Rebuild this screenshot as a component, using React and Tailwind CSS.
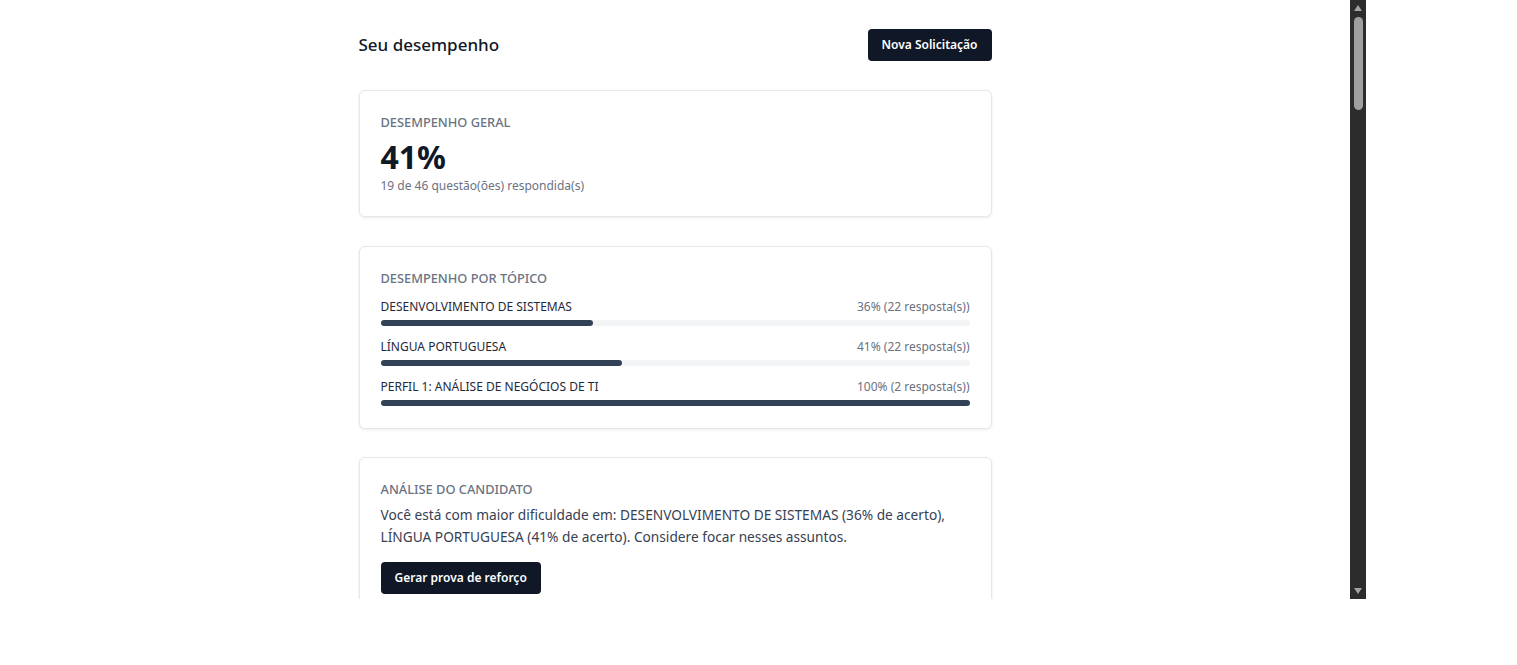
import React from "react";

const topics = [
  { name: "DESENVOLVIMENTO DE SISTEMAS", pct: 36, n: 22 },
  { name: "LÍNGUA PORTUGUESA", pct: 41, n: 22 },
  { name: "PERFIL 1: ANÁLISE DE NEGÓCIOS DE TI", pct: 100, n: 2 },
];

function Card({ children }) {
  return (
    <div className="rounded-md border border-gray-200 bg-white px-[21px] pt-[23px] pb-[22px] shadow-[0_1px_3px_rgba(0,0,0,0.08)]">
      {children}
    </div>
  );
}

function Label({ children }) {
  return (
    <div className="text-[12.8px] leading-4 font-medium uppercase text-gray-500">
      {children}
    </div>
  );
}

export default function App() {
  return (
    <div
      className="w-[1517px] h-[665px] bg-white"
      style={{ fontFamily: '"Noto Sans", "Open Sans", sans-serif' }}
    >
      <div className="flex h-[599px] w-[1366px]">
        <div className="h-full w-[1350px] overflow-hidden">
          <div className="mx-auto w-[633px] pt-[29px]">
            <div className="flex items-center justify-between">
              <h1 className="text-[17px] font-medium text-gray-900">Seu desempenho</h1>
              <button className="h-8 rounded-[4px] bg-gray-900 px-[14px] text-[12px] font-semibold text-white">
                Nova Solicitação
              </button>
            </div>

            <div className="mt-[29px] flex flex-col gap-[29px]">
              <Card>
                <Label>Desempenho geral</Label>
                <div className="mt-[7px] text-[32px] leading-[40px] font-bold text-gray-900">41%</div>
                <div className="mt-[1px] text-[12px] leading-4 text-gray-500">
                  19 de 46 questão(ões) respondida(s)
                </div>
              </Card>

              <Card>
                <Label>Desempenho por tópico</Label>
                <div className="mt-3 flex flex-col gap-3">
                  {topics.map((t) => (
                    <div key={t.name}>
                      <div className="flex justify-between text-[12px] leading-[18px]">
                        <span className="text-gray-800">{t.name}</span>
                        <span className="text-gray-500">
                          {t.pct}% ({t.n} resposta(s))
                        </span>
                      </div>
                      <div className="mt-1 h-1.5 w-full rounded-full bg-gray-100">
                        <div
                          className="h-1.5 rounded-full bg-slate-700"
                          style={{ width: `${t.pct}%` }}
                        />
                      </div>
                    </div>
                  ))}
                </div>
              </Card>

              <div className="-mt-[1px]">
                <Card>
                  <Label>Análise do candidato</Label>
                  <p className="mt-[7px] text-[13.7px] leading-[22px] text-gray-700">
                    Você está com maior dificuldade em: DESENVOLVIMENTO DE SISTEMAS (36% de acerto),
                    LÍNGUA PORTUGUESA (41% de acerto). Considere focar nesses assuntos.
                  </p>
                  <button className="mt-[14px] h-8 rounded-[4px] bg-gray-900 px-[14px] text-[12px] font-semibold text-white">
                    Gerar prova de reforço
                  </button>
                </Card>
              </div>
            </div>
          </div>
        </div>

        <div className="flex h-full w-4 flex-col items-center bg-[#2c2c2c]">
          <div className="flex h-[16px] w-full items-center justify-center">
            <svg width="8" height="6" viewBox="0 0 8 6">
              <path d="M4 0 L8 6 L0 6 Z" fill="#a3a3a3" />
            </svg>
          </div>
          <div className="mt-[1px] h-[93px] w-[9px] rounded-full bg-[#9f9f9f]" />
          <div className="flex-1" />
          <div className="flex h-[16px] w-full items-center justify-center">
            <svg width="8" height="6" viewBox="0 0 8 6">
              <path d="M0 0 L8 0 L4 6 Z" fill="#a3a3a3" />
            </svg>
          </div>
        </div>
      </div>
    </div>
  );
}
